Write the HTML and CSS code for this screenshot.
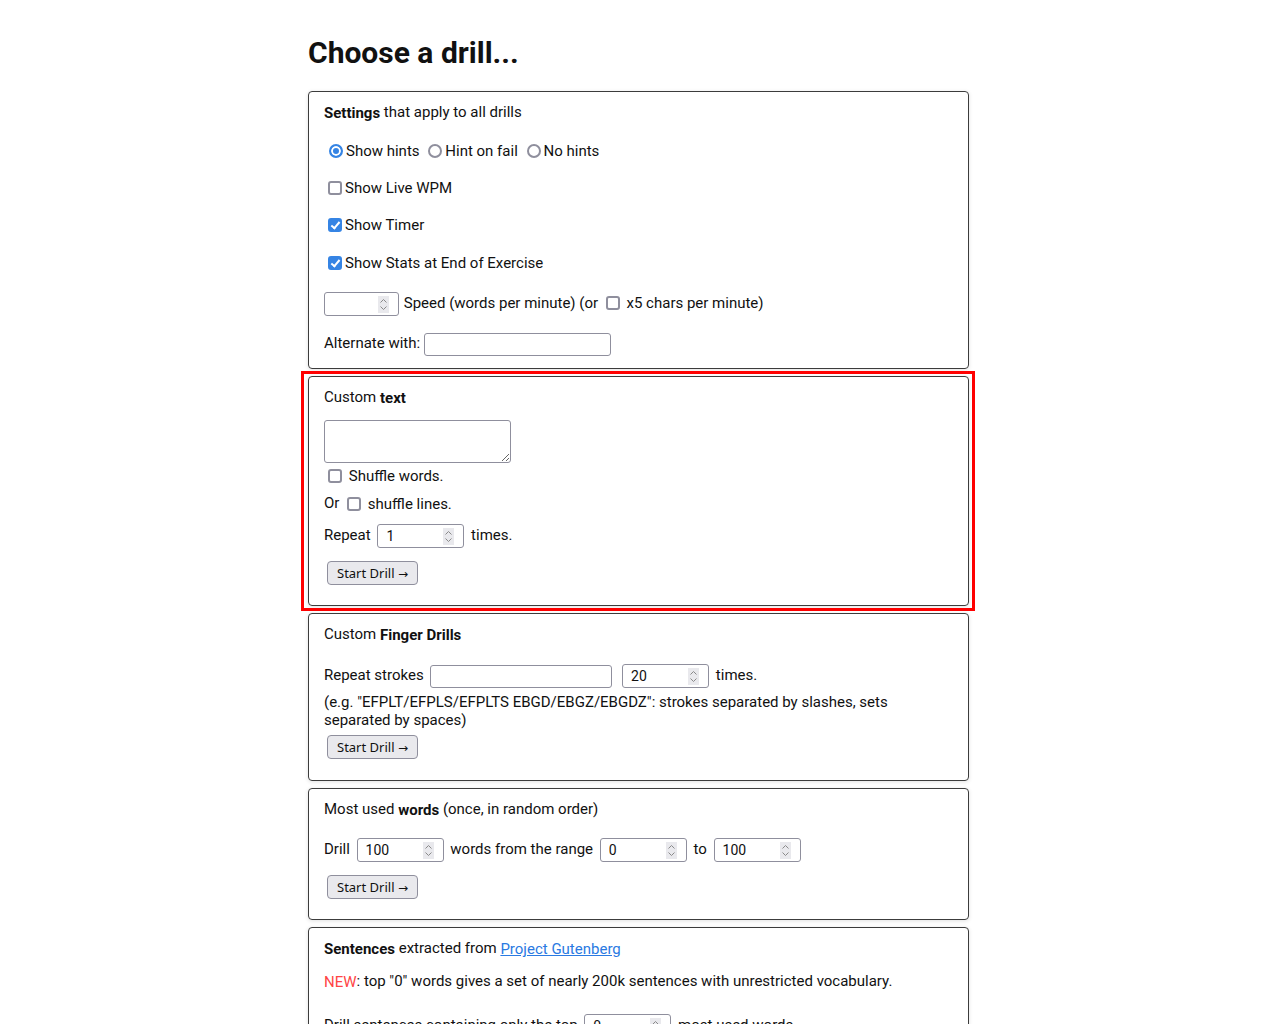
FILE: index.html
```html
<!DOCTYPE html>
<html>
<head>
<meta charset="utf-8">
<title>Choose a drill...</title>
<link rel="stylesheet" href="styles.css">
</head>
<body>
<main class="page">
  <h1 class="title">Choose a drill...</h1>

  <section class="box settings">
    <div class="row head"><b>Settings</b> that apply to all drills</div>
    <div class="row r-radios"><label><input type="radio" name="hints" checked>Show hints</label> <label><input type="radio" name="hints">Hint on fail</label> <label><input type="radio" name="hints">No hints</label></div>
    <div class="row r-wpm"><label><input type="checkbox">Show Live WPM</label></div>
    <div class="row r-timer"><label><input type="checkbox" checked>Show Timer</label></div>
    <div class="row r-stats"><label><input type="checkbox" checked>Show Stats at End of Exercise</label></div>
    <div class="row tall r-speed"><span class="num speed"><input type="text" value=""><span class="spin"><svg width="9" height="13" viewBox="0 0 9 13"><path d="M1.5 4.5 4.5 1.5 7.5 4.5M1.5 8.5 4.5 11.5 7.5 8.5" fill="none" stroke="#8a8a8a" stroke-width="1"/></svg></span></span> Speed (words per minute) (or <input class="cb-wide" type="checkbox"> x5 chars per minute)</div>
    <div class="row tall r-alt">Alternate with: <input class="text alt" type="text"></div>
  </section>

  <section class="box custom highlighted">
    <div class="row head">Custom <b>text</b></div>
    <textarea class="area"></textarea>
    <div class="row r-shuffle"><label><input class="cb-shuffle" type="checkbox"> Shuffle words.</label></div>
    <div class="row r-or">Or <label><input type="checkbox"> shuffle lines.</label></div>
    <div class="row tall r-repeat">Repeat <span class="num"><input type="text" value="1"><span class="spin"><svg width="9" height="13" viewBox="0 0 9 13"><path d="M1.5 4.5 4.5 1.5 7.5 4.5M1.5 8.5 4.5 11.5 7.5 8.5" fill="none" stroke="#8a8a8a" stroke-width="1"/></svg></span></span> times.</div>
    <div class="btn-row b-custom"><button class="start">Start Drill <span class="arrow">→</span></button></div>
  </section>

  <section class="box finger">
    <div class="row head">Custom <b>Finger Drills</b></div>
    <div class="row tall r-strokes">Repeat strokes <input class="text strokes" type="text"> <span class="num"><input type="text" value="20"><span class="spin"><svg width="9" height="13" viewBox="0 0 9 13"><path d="M1.5 4.5 4.5 1.5 7.5 4.5M1.5 8.5 4.5 11.5 7.5 8.5" fill="none" stroke="#8a8a8a" stroke-width="1"/></svg></span></span> times.</div>
    <p class="hint">(e.g. "EFPLT/EFPLS/EFPLTS EBGD/EBGZ/EBGDZ": strokes separated by slashes, sets separated by spaces)</p>
    <div class="btn-row b-finger"><button class="start">Start Drill <span class="arrow">→</span></button></div>
  </section>

  <section class="box words">
    <div class="row head">Most used <b>words</b> (once, in random order)</div>
    <div class="row tall r-drill">Drill <span class="num"><input type="text" value="100"><span class="spin"><svg width="9" height="13" viewBox="0 0 9 13"><path d="M1.5 4.5 4.5 1.5 7.5 4.5M1.5 8.5 4.5 11.5 7.5 8.5" fill="none" stroke="#8a8a8a" stroke-width="1"/></svg></span></span> words from the range <span class="num"><input type="text" value="0"><span class="spin"><svg width="9" height="13" viewBox="0 0 9 13"><path d="M1.5 4.5 4.5 1.5 7.5 4.5M1.5 8.5 4.5 11.5 7.5 8.5" fill="none" stroke="#8a8a8a" stroke-width="1"/></svg></span></span> to <span class="num"><input type="text" value="100"><span class="spin"><svg width="9" height="13" viewBox="0 0 9 13"><path d="M1.5 4.5 4.5 1.5 7.5 4.5M1.5 8.5 4.5 11.5 7.5 8.5" fill="none" stroke="#8a8a8a" stroke-width="1"/></svg></span></span></div>
    <div class="btn-row b-words"><button class="start">Start Drill <span class="arrow">→</span></button></div>
  </section>

  <section class="box sentences">
    <div class="row head"><b>Sentences</b> extracted from <a href="#">Project Gutenberg</a></div>
    <div class="row r-new"><span class="new">NEW</span>: top "0" words gives a set of nearly 200k sentences with unrestricted vocabulary.</div>
    <div class="row tall r-sent">Drill sentences containing only the top <span class="num"><input type="text" value="0"><span class="spin"><svg width="9" height="13" viewBox="0 0 9 13"><path d="M1.5 4.5 4.5 1.5 7.5 4.5M1.5 8.5 4.5 11.5 7.5 8.5" fill="none" stroke="#8a8a8a" stroke-width="1"/></svg></span></span> most used words.</div>
    <div class="btn-row b-words"><button class="start">Start Drill <span class="arrow">→</span></button></div>
  </section>
</main>
</body>
</html>
```
FILE: styles.css
```css
html, body {
  margin: 0;
  padding: 0;
  background: #fff;
}
body {
  font-family: Roboto, "Liberation Sans", sans-serif;
  font-size: 15px;
  color: #111;
}
.page {
  width: 661px;
  margin: 0 auto;
  padding: 35px 1px 40px 0;
}
.title {
  margin: 0 0 21px;
  font-size: 30px;
  font-weight: 700;
  line-height: 35px;
}
.box {
  position: relative;
  border: 1px solid #3c3c3c;
  border-radius: 4px;
  box-shadow: 0 1px 4px rgba(0, 0, 0, 0.12);
  padding: 11px 15px 13px;
  margin-bottom: 7px;
}
.highlighted::after {
  content: "";
  position: absolute;
  left: -8px;
  right: -7px;
  top: -6px;
  bottom: -6px;
  border: 3px solid #ff0000;
  pointer-events: none;
}
.row {
  height: 20px;
  line-height: 20px;
  white-space: nowrap;
}
.row.head {
  height: 18px;
  line-height: 18px;
}
.row.tall {
  height: 24px;
  line-height: 24px;
}
.row > *, label > * {
  vertical-align: middle;
}
label {
  display: inline-block;
}

/* custom drawn controls */
input[type="checkbox"], input[type="radio"] {
  -webkit-appearance: none;
  appearance: none;
  box-sizing: border-box;
  width: 14px;
  height: 14px;
  border: 2px solid #8f8f9d;
  background: #fff;
  vertical-align: middle;
  position: relative;
  top: -1px;
}
input[type="checkbox"] {
  margin: 0 3px 0 4px;
  border-radius: 3px;
}
input[type="checkbox"]:checked {
  background: #3584e4;
  border-color: #3584e4;
}
input[type="checkbox"]:checked::after {
  content: "";
  position: absolute;
  left: 3px;
  top: 0px;
  width: 3px;
  height: 7px;
  border: solid #fff;
  border-width: 0 2px 2px 0;
  transform: rotate(40deg);
}
input[type="radio"] {
  margin: 0 3px 0 5px;
  border-radius: 50%;
}
input[type="radio"]:checked {
  border-color: #3584e4;
  background: #3584e4;
  box-shadow: inset 0 0 0 2px #fff;
}
.cb-wide {
  margin: 0 4px 0 3px;
}
.cb-shuffle {
  margin-left: 3px;
}
a {
  color: #2a7ae2;
}
.new {
  color: #ff4545;
}

/* settings rows */
.r-radios { margin-top: 19px; }
.r-wpm { margin-top: 17px; }
.r-timer { margin-top: 17px; }
.r-stats { margin-top: 18px; }
.r-speed { margin-top: 19px; }
.r-alt { margin-top: 16px; }

/* fields */
.text, .num {
  box-sizing: border-box;
  height: 23px;
  border: 1px solid #8f8f9d;
  border-radius: 3px;
  background: #fff;
  margin: 0 3px;
  font: inherit;
  color: inherit;
  vertical-align: middle;
}
.text {
  padding: 0 6px;
}
.alt { width: 187px; margin-left: 0; }
.strokes { width: 182px; }
.num {
  display: inline-flex;
  align-items: center;
  width: 87px;
  height: 24px;
  padding: 0 9px 0 8px;
  line-height: normal;
}
.num.speed {
  width: 75px;
  margin-left: 0;
  margin-right: 1px;
}
.num input {
  border: 0;
  outline: 0;
  padding: 0;
  margin: 0;
  width: 100%;
  min-width: 0;
  font: 14px Roboto, sans-serif;
  color: #111;
  background: transparent;
}
.spin {
  flex: none;
  width: 11px;
  height: 17px;
  background: #e9e9ed;
  display: flex;
  align-items: center;
  justify-content: center;
}
.spin svg { display: block; }

/* custom text */
.area {
  display: block;
  box-sizing: border-box;
  width: 187px;
  height: 43px;
  margin: 14px 0 0;
  border: 1px solid #8f8f9d;
  border-radius: 3px;
  resize: both;
  font: inherit;
}
.r-shuffle { margin-top: 2px; }
.r-or { margin-top: 8px; }
.r-repeat { margin-top: 10px; }

.btn-row {
  height: 24px;
  padding-left: 3px;
}
.start {
  box-sizing: border-box;
  height: 24px;
  padding: 0 9px 0 9px;
  margin: 0;
  background: #e9e9ed;
  border: 1px solid #8f8f9d;
  border-radius: 4px;
  font-family: "Noto Sans", "Open Sans", sans-serif;
  font-size: 13px;
  color: #111;
  vertical-align: top;
}
.arrow {
  font-family: Roboto, "DejaVu Sans", sans-serif;
  font-size: 12px;
}
.b-custom { margin-top: 14px; margin-bottom: 7px; }

/* finger */
.r-strokes { margin-top: 20px; }
.hint {
  margin: 6px 0 0;
  line-height: 18px;
}
.b-finger { margin-top: 6px; margin-bottom: 8px; }

/* words */
.r-drill { margin-top: 19px; }
.b-words { margin-top: 14px; margin-bottom: 7px; }

/* sentences */
.r-new { margin-top: 14px; }
.r-sent { margin-top: 22px; }
```
